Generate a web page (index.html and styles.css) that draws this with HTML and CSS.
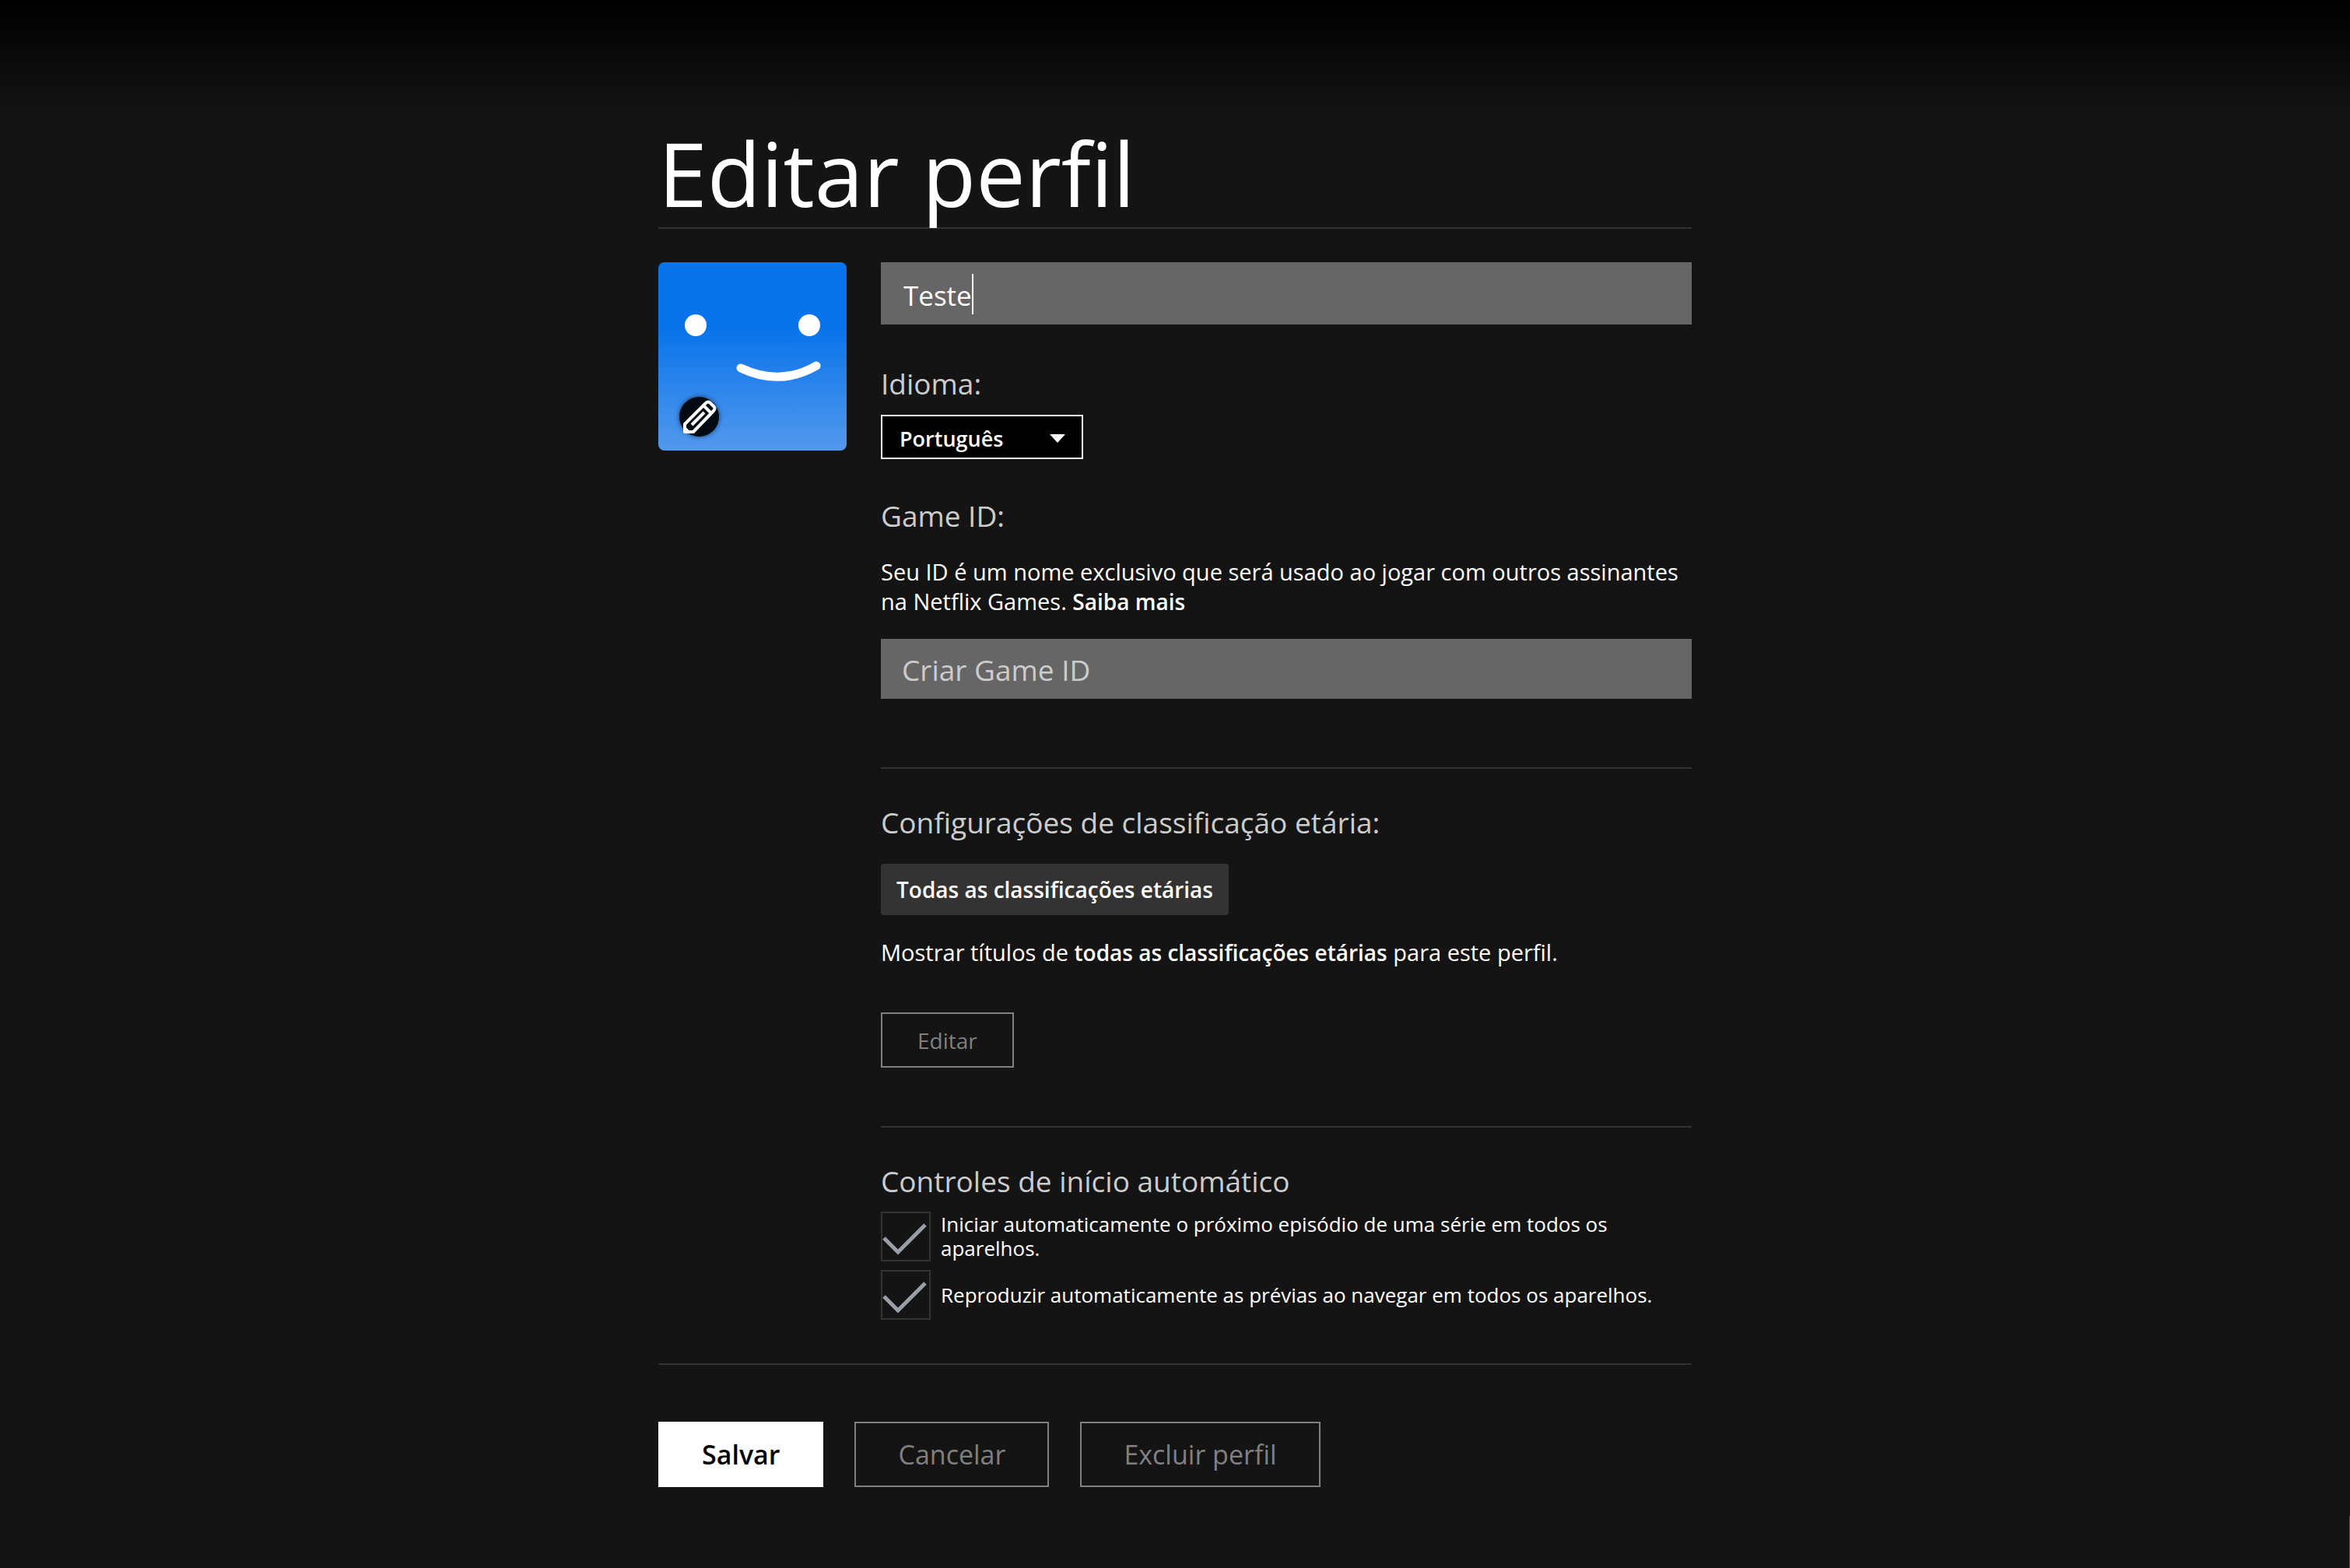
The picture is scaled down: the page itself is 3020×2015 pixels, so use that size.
FILE: index.html
```html
<!DOCTYPE html>
<html lang="pt-BR">
<head>
<meta charset="utf-8">
<title>Editar perfil</title>
<link rel="stylesheet" href="styles.css">
</head>
<body>
<main class="page">
  <form class="profile">
    <h1 class="title">Editar perfil</h1>
    <div class="body">
      <button class="avatar" type="button" aria-label="Alterar avatar">
        <svg class="face" viewBox="0 0 242 242" aria-hidden="true">
          <circle cx="48" cy="81" r="14"/>
          <circle cx="194" cy="81" r="14"/>
          <path d="M106 136Q157 160 203 133"/>
        </svg>
        <span class="badge">
          <svg viewBox="0 0 44 44" aria-hidden="true">
            <path d="M3 41V31L30 4Q33 1 36 4L40 8Q43 11 40 14L14 41ZM27 7L37 17M12 32L28 16"/>
            <path class="tip" d="M3 34L10 41H3Z"/>
          </svg>
        </span>
      </button>
      <div class="settings">
        <div class="name-wrap">
          <input class="field name" type="text" value="Teste" aria-label="Nome do perfil">
          <span class="caret" aria-hidden="true"></span>
        </div>
        <label class="label" for="lang">Idioma:</label>
        <div class="select-wrap">
          <select class="select" id="lang"><option>Português</option></select>
        </div>
        <label class="label game-label" for="game">Game ID:</label>
        <p class="text">Seu ID é um nome exclusivo que será usado ao jogar com outros assinantes na Netflix Games. <a class="link" href="#">Saiba mais</a></p>
        <input class="field game" id="game" type="text" placeholder="Criar Game ID">
        <section class="section">
          <h2 class="label">Configurações de classificação etária:</h2>
          <div class="tag">Todas as classificações etárias</div>
          <p class="text">Mostrar títulos de <b>todas as classificações etárias</b> para este perfil.</p>
          <button class="btn small" type="button">Editar</button>
        </section>
        <section class="section">
          <h2 class="label">Controles de início automático</h2>
          <div class="checks">
            <label class="check"><input type="checkbox" checked><svg viewBox="0 0 64 64" aria-hidden="true"><path d="M4 34L22 52L57 17"/></svg><span>Iniciar automaticamente o próximo episódio de uma série em todos os aparelhos.</span></label>
            <label class="check"><input type="checkbox" checked><svg viewBox="0 0 64 64" aria-hidden="true"><path d="M4 34L22 52L57 17"/></svg><span>Reproduzir automaticamente as prévias ao navegar em todos os aparelhos.</span></label>
          </div>
        </section>
      </div>
    </div>
    <div class="actions">
      <button class="btn primary" type="submit">Salvar</button>
      <button class="btn" type="button">Cancelar</button>
      <button class="btn" type="button">Excluir perfil</button>
    </div>
  </form>
</main>
</body>
</html>
```
FILE: styles.css
```css
* {
  box-sizing: border-box;
}

body {
  margin: 0;
  min-height: 100vh;
  background: #141414 linear-gradient(#000, #141414) 0 0 / 100% 150px no-repeat;
  color: #fff;
  font-family: "Open Sans", "Noto Sans", sans-serif;
}

/* thin scroll indicator on the window edge */
body::after {
  content: "";
  position: fixed;
  right: 0;
  bottom: 0;
  width: 1px;
  height: 67px;
  background: #555;
}

.page {
  display: flex;
  justify-content: center;
  padding: 165px 24px 96px;
}

.profile {
  width: 100%;
  max-width: 1328px;
}

.title {
  margin: 0;
  padding-bottom: 13px;
  border-bottom: 2px solid #333;
  font-size: 113px;
  font-weight: 400;
  line-height: 114px;
}

.body {
  display: grid;
  grid-template-columns: 242px minmax(0, 1fr);
  gap: 44px;
  padding: 43px 0 56px;
  border-bottom: 2px solid #333;
}

.avatar {
  position: relative;
  width: 242px;
  height: 242px;
  padding: 0;
  border: 0;
  border-radius: 8px;
  background: linear-gradient(#0873ea, #0873ea 35%, #5399ee);
}

.face {
  display: block;
  fill: #fff;
}

.face path {
  fill: none;
  stroke: #fff;
  stroke-width: 11;
  stroke-linecap: round;
}

.badge {
  position: absolute;
  left: 27px;
  bottom: 18px;
  display: grid;
  place-items: center;
  width: 51px;
  height: 51px;
  border-radius: 50%;
  background: #040a12;
  box-shadow: 0 0 6px rgba(0, 0, 0, 0.6);
}

.badge svg {
  width: 44px;
  height: 44px;
  fill: none;
  stroke: #fff;
  stroke-width: 4;
  stroke-linejoin: round;
}

.badge .tip {
  fill: #fff;
  stroke-width: 1;
}

.settings {
  display: flex;
  flex-direction: column;
  align-items: flex-start;
}

.field {
  display: block;
  width: 100%;
  border: 0;
  border-radius: 0;
  outline: 0;
  background: #666;
  color: #fff;
  font: 400 37px/48px "Open Sans", "Noto Sans", sans-serif;
}

.field::placeholder {
  color: #ccc;
  opacity: 1;
}

.name-wrap {
  position: relative;
  width: 100%;
  margin-bottom: 52px;
}

.name {
  height: 80px;
  padding: 4px 29px 0;
  font-size: 35px;
}

.caret {
  position: absolute;
  top: 15px;
  left: 117px;
  width: 2px;
  height: 52px;
  background: #fff;
}

.game {
  height: 77px;
  padding: 1px 27px 0;
}

.label {
  margin: 0;
  color: #ccc;
  font-size: 37px;
  font-weight: 400;
  line-height: 48px;
}

.game-label {
  margin-top: 49px;
}

.select-wrap {
  position: relative;
  width: 260px;
  margin-top: 16px;
}

.select-wrap::after {
  content: "";
  position: absolute;
  top: 25px;
  right: 23px;
  border: 10px solid transparent;
  border-top: 11px solid #fff;
  border-bottom: 0;
  pointer-events: none;
}

.select {
  display: block;
  width: 100%;
  height: 57px;
  padding: 4px 48px 0 22px;
  border: 2px solid #fff;
  border-radius: 0;
  background: #000;
  color: #fff;
  font: 600 27px/36px "Open Sans", "Noto Sans", sans-serif;
  appearance: none;
}

.text {
  margin: 29px 0;
  font-size: 29px;
  line-height: 38px;
}

.text b,
.link {
  color: #fff;
  font-size: 28px;
  font-weight: 600;
  text-decoration: none;
}

.section {
  width: 100%;
  padding-top: 45px;
  border-top: 2px solid #333;
}

.game + .section {
  margin-top: 88px;
}

.section + .section {
  margin-top: 75px;
}

.tag {
  width: fit-content;
  margin-top: 29px;
  padding: 14px 20px;
  border-radius: 4px;
  background: #333;
  font-size: 28px;
  font-weight: 600;
  line-height: 38px;
}

.checks {
  display: grid;
  gap: 11px;
  margin-top: 15px;
}

.check {
  display: grid;
  grid-template-columns: 64px minmax(0, 1fr);
  align-items: center;
  column-gap: 13px;
  font-size: 26px;
  line-height: 31px;
}

.check input,
.check svg {
  grid-area: 1 / 1;
  width: 64px;
  height: 64px;
  margin: 0;
}

.check input {
  border: 2px solid #333;
  appearance: none;
}

.check svg {
  fill: none;
  pointer-events: none;
}

.check path {
  stroke: #999fa6;
  stroke-width: 5;
}

.check span {
  grid-column: 2;
  max-width: 940px;
}

.btn {
  height: 84px;
  padding: 0 54px;
  border: 2px solid #808080;
  background: transparent;
  color: #808080;
  font: 400 34px/48px "Open Sans", "Noto Sans", sans-serif;
}

.small {
  height: 71px;
  margin-top: 29px;
  padding: 0 45px;
  font-size: 28px;
  line-height: 38px;
}

.primary {
  border-color: #fff;
  background: #fff;
  color: #000;
  font-weight: 600;
}

.actions {
  display: flex;
  flex-wrap: wrap;
  gap: 40px;
  padding-top: 73px;
}
```
